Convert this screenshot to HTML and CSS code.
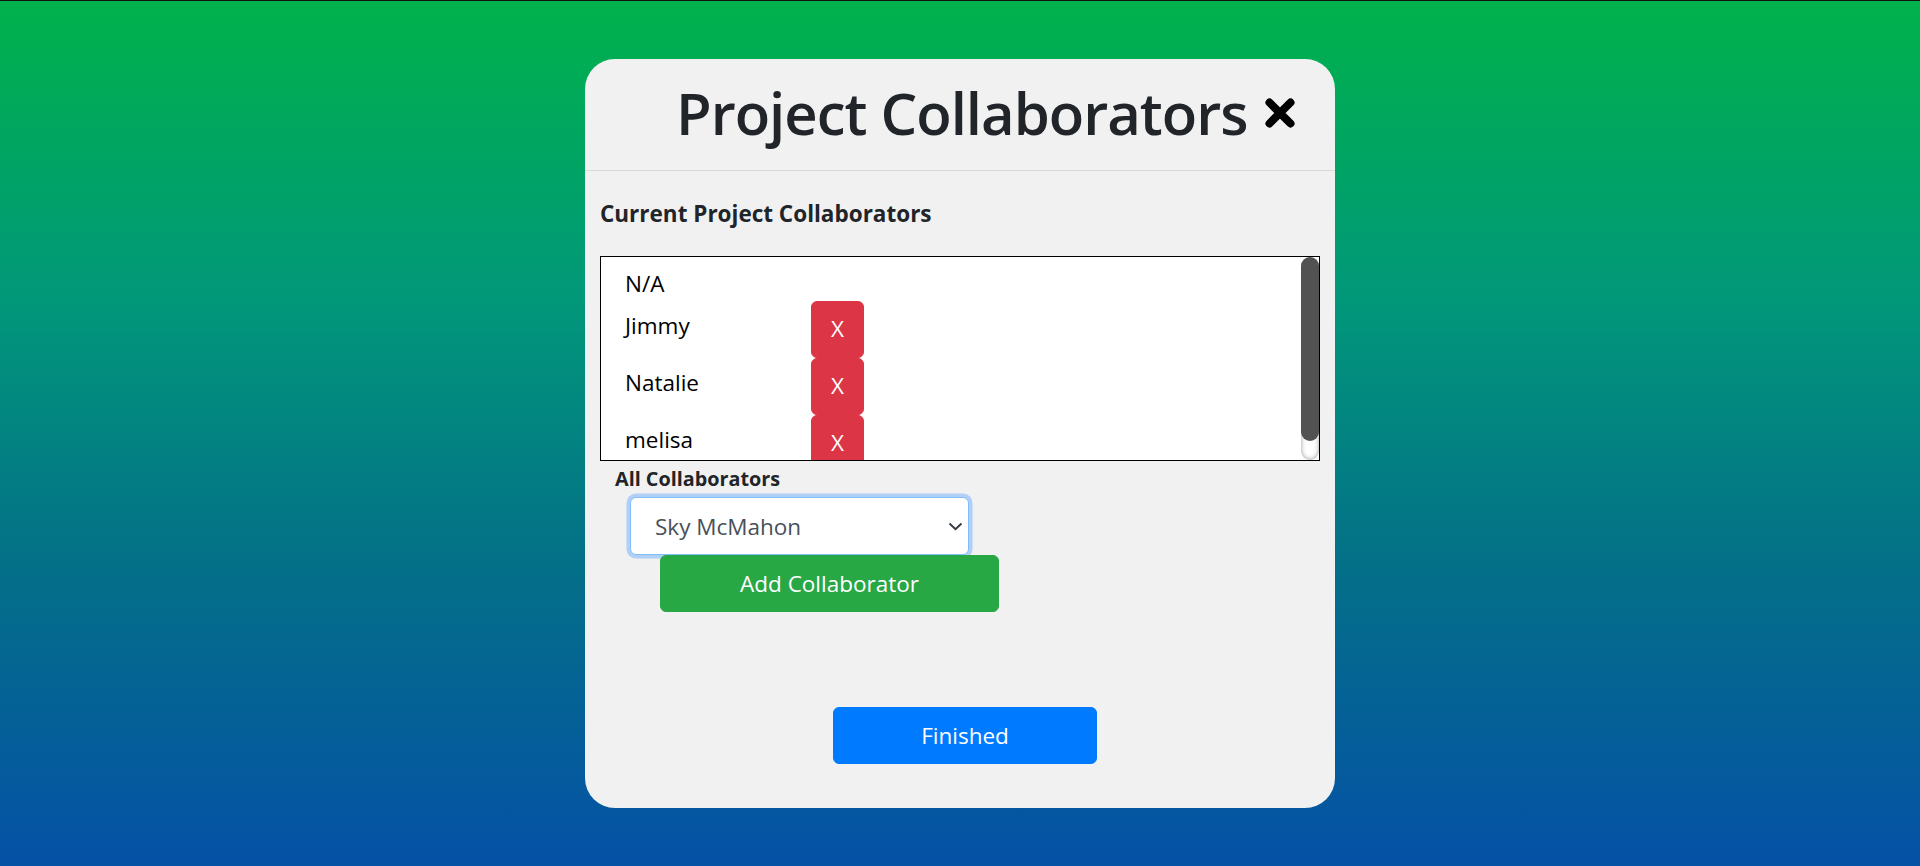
FILE: index.html
```html
<!DOCTYPE html>
<html lang="en">
<head>
<meta charset="utf-8">
<title>Project Collaborators</title>
<link rel="stylesheet" href="styles.css">
</head>
<body>
<div class="modal">
  <div class="modal-header">
    <h1 class="modal-title">Project Collaborators</h1>
    <button class="close-btn" aria-label="Close">
      <svg width="30" height="30" viewBox="0 0 30 30"><path d="M4.5 4.5 L25.5 25.5 M25.5 4.5 L4.5 25.5" stroke="#000" stroke-width="8" stroke-linecap="round" fill="none"/></svg>
    </button>
  </div>
  <div class="modal-body">
    <h5 class="section-title">Current Project Collaborators</h5>
    <div class="list-wrap">
      <div class="collab-list">
        <div class="collab-empty">N/A</div>
        <div class="collab-row"><span class="collab-name">Jimmy</span><button class="btn-remove">X</button></div>
        <div class="collab-row"><span class="collab-name">Natalie</span><button class="btn-remove">X</button></div>
        <div class="collab-row"><span class="collab-name">melisa</span><button class="btn-remove">X</button></div>
      </div>
      <div class="scroll-track"></div>
      <div class="scroll-thumb"></div>
    </div>
    <div class="add-section">
      <label class="add-label">All Collaborators</label>
      <div class="select-wrap">
        <select class="collab-select"><option>Sky McMahon</option><option>Jimmy</option><option>Natalie</option><option>melisa</option></select>
        <svg class="select-arrow" width="15" height="9" viewBox="0 0 15 9"><path d="M1.5 1.5 L7.5 7.3 L13.5 1.5" stroke="#343a40" stroke-width="1.9" fill="none"/></svg>
      </div>
      <button class="btn-add">Add Collaborator</button>
    </div>
  </div>
  <div class="modal-footer">
    <button class="btn-finish">Finished</button>
  </div>
</div>
</body>
</html>
```

FILE: styles.css
```css
* { box-sizing: border-box; }
html, body { margin: 0; padding: 0; }
body {
  height: 866px;
  overflow: hidden;
  border-top: 1px solid #111;
  background: linear-gradient(to bottom, #00b24b 0%, #01977a 35%, #047088 65%, #0551a6 100%);
  font-family: "Segoe UI", "Open Sans", "Noto Sans", sans-serif;
  color: #212529;
}
.modal {
  width: 750px;
  height: 749px;
  margin: 58px auto 0;
  background: #f1f1f1;
  border-radius: 30px;
  display: flex;
  flex-direction: column;
}
.modal-header {
  height: 112px;
  flex: none;
  border-bottom: 1px solid #dadada;
  display: flex;
  align-items: flex-start;
  padding: 18px 0 0 91px;
}
.modal-title {
  margin: 0;
  font-size: 58px;
  font-weight: 600;
  letter-spacing: -1px;
  line-height: 72px;
  color: #212529;
}
.close-btn {
  margin: 21px 0 0 18px;
  width: 30px;
  height: 30px;
  padding: 0;
  border: 0;
  background: none;
  display: block;
}
.close-btn svg { display: block; }
.modal-body {
  flex: 1;
  padding: 0 15px;
}
.section-title {
  margin: 29px 0 28px;
  font-size: 22.5px;
  font-weight: 700;
  line-height: 28px;
  color: #212529;
}
.list-wrap {
  position: relative;
  height: 205px;
}
.collab-list {
  height: 205px;
  border: 1px solid #000;
  background: #fff;
  overflow: hidden;
  padding: 9px 0 10px 24px;
  color: #000;
}
.scroll-track {
  position: absolute;
  top: 1px;
  right: 1px;
  bottom: 1px;
  width: 18px;
  border-radius: 10px;
  box-shadow: inset 0 0 5px #9a9a9a;
}
.scroll-thumb {
  position: absolute;
  top: 1px;
  right: 1px;
  width: 18px;
  height: 184px;
  border-radius: 10px;
  background: #525252;
}
.collab-empty {
  font-size: 22.5px;
  line-height: 35px;
}
.collab-row {
  display: flex;
  align-items: flex-start;
  height: 57px;
}
.collab-name {
  width: 186px;
  font-size: 22.5px;
  line-height: 36px;
  padding-top: 7px;
}
.btn-remove {
  width: 53px;
  height: 57px;
  padding: 0;
  border: 1px solid #dc3545;
  border-radius: 6px;
  background: #dc3545;
  color: #fff;
  font-family: inherit;
  font-size: 22.5px;
  line-height: 1;
}
.add-section {
  padding: 4px 0 0 15px;
}
.add-label {
  display: block;
  font-size: 19.8px;
  font-weight: 700;
  line-height: 28px;
  color: #212529;
}
.select-wrap {
  position: relative;
  width: 339px;
  margin: 4px 0 0 15px;
}
.collab-select {
  display: block;
  width: 339px;
  height: 58px;
  appearance: none;
  -webkit-appearance: none;
  padding: 0 40px 0 24px;
  border: 1px solid #80bdff;
  border-radius: 6px;
  box-shadow: 0 0 0 3.5px rgba(0, 123, 255, 0.27);
  background: #fff;
  color: #495057;
  font-family: inherit;
  font-size: 22.5px;
  outline: none;
}
.select-arrow {
  position: absolute;
  right: 6px;
  top: 25px;
  pointer-events: none;
}
.btn-add {
  display: block;
  position: relative;
  width: 339px;
  height: 57px;
  margin: 0 0 0 45px;
  border: 1px solid #28a745;
  border-radius: 6px;
  background: #28a745;
  color: #fff;
  font-family: inherit;
  font-size: 22.5px;
}
.modal-footer {
  flex: none;
  display: flex;
  justify-content: center;
  padding: 0 0 44px 10px;
}
.btn-finish {
  width: 264px;
  height: 57px;
  border: 1px solid #007bff;
  border-radius: 6px;
  background: #007bff;
  color: #fff;
  font-family: inherit;
  font-size: 22.5px;
}
```
